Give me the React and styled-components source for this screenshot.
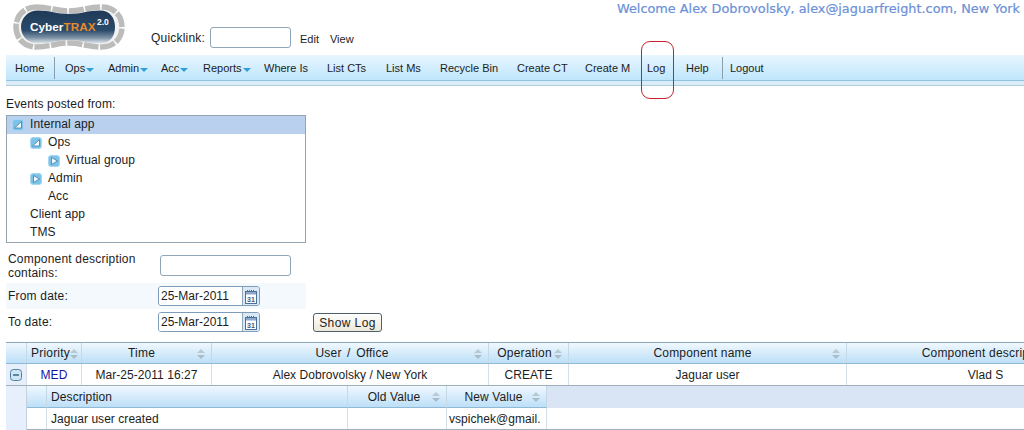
import React from 'react';
import styled, { createGlobalStyle } from 'styled-components';

const Global = createGlobalStyle`
  html, body { margin: 0; padding: 0; background: #fff; height: 430px; overflow: hidden; }
  body { font-family: "Liberation Sans", Arial, sans-serif; font-size: 12px; color: #1c1c1c; letter-spacing: .2px; }
`;
const Page = styled.div`position: relative; width: 1024px; height: 430px; overflow: hidden;`;
const Header = styled.header`display: flex; justify-content: space-between; height: 55px;`;
const Brand = styled.div`display: flex; align-items: flex-start;`;
const LogoSvg = styled.svg`margin: 2px 0 0 12px; flex: none;`;
const Quick = styled.div`display: flex; align-items: center; margin: 27px 0 0 23px; height: 21px;`;
const QuickLabel = styled.span`width: 59px;`;
const TextInput = styled.input`
  box-sizing: border-box; width: ${p => p.$w}px; height: 21px; padding: 0 3px; background: #fff;
  border: 1px solid #8fa6b8; border-radius: 3px; outline: none; font: inherit;
`;
const QuickLink = styled.span`font-size: 11px; margin-left: ${p => p.$ml}px; padding-top: 3px; letter-spacing: 0;`;
const Welcome = styled.div`
  font-family: "DejaVu Sans", sans-serif; font-size: 12.85px; color: #6b90d8; letter-spacing: 0;
  -webkit-text-stroke: .2px #6b90d8; margin: 1px 4px 0 0; white-space: nowrap;
`;
const MenuBar = styled.nav`
  display: flex; align-items: center; box-sizing: border-box; height: 31px; margin-left: 6px; padding: 0 0 4px 9px;
  border-bottom: 1px solid #b4cbd8;
  background: linear-gradient(#e8f6ff 0, #bfe6fc 25px, #8fc4df 25px, #8fc4df 26px, #d9ecf8 26px, #d9ecf8 100%);
`;
const MenuItem = styled.a`
  display: flex; align-items: center; width: ${p => p.$w}px; flex: none; font-size: 11px; white-space: nowrap; letter-spacing: 0;
`;
const Caret = styled.i`
  display: block; width: 0; height: 0; margin: 3px 0 0 1px;
  border-left: 4px solid transparent; border-right: 4px solid transparent; border-top: 4px solid #2f9fd6;
`;
const MenuSep = styled.span`display: block; width: 1px; height: 22px; background: #88a0ad; margin-right: ${p => p.$mr}px; flex: none;`;
const Highlight = styled.div`
  position: absolute; left: 641px; top: 41px; width: 31px; height: 56px; border: 1px solid #c8202c; border-radius: 9px;
`;
const Main = styled.main`padding: 11px 0 0 6px;`;
const Caption = styled.div`height: 18px; line-height: 14px; letter-spacing: .15px;`;
const Tree = styled.div`box-sizing: border-box; width: 300px; height: 128px; border: 1px solid #93a5b0; letter-spacing: .1px;`;
const TreeRow = styled.div`
  display: flex; align-items: center; height: 18px; padding-left: ${p => p.$indent}px; line-height: 16px; padding-bottom: 2px; box-sizing: border-box;
  background: ${p => p.$sel ? '#b9d0ee' : 'transparent'};
`;
const TreeIconBox = styled.svg`flex: none; margin: 2px 6px 0 0;`;
const FormRows = styled.div`margin-top: 5px;`;
const FormRow = styled.div`
  display: flex; align-items: center; height: ${p => p.$h}px; width: 300px;
  background: ${p => p.$alt ? '#f3f9fd' : 'transparent'}; margin-top: ${p => p.$mt || 0}px; position: relative;
`;
const FormLabel = styled.label`width: ${p => p.$w}px; padding: ${p => p.$pt || 0}px 0 0 2px; line-height: 14px; flex: none;`;
const DateField = styled.div`display: flex; box-sizing: border-box; width: 102px; height: 20px; border: 1px solid #7f9db8; border-radius: 3px; overflow: hidden;`;
const DateText = styled.span`flex: 1; line-height: 18px; padding-left: 2px; background: #fff; font-size: 12px; letter-spacing: 0;`;
const CalBtn = styled.span`display: flex; align-items: center; justify-content: center; width: 16px; background: #dbe8f6; border-left: 1px solid #8fa6bd;`;
const ShowLog = styled.button`
  position: absolute; left: 307px; top: 4px; width: 69px; height: 19px; padding: 0;
  border: 1px solid #50606a; border-radius: 3px; font: inherit; letter-spacing: .4px; color: #222;
  background: linear-gradient(#fff, #ece9d8);
`;
const Grid = styled.section`width: 1018px; margin-top: 7px;`;
const HeadRow = styled.div`
  display: flex; height: 22px; box-sizing: border-box; border-top: 1px solid #8ea6b5; border-bottom: 1px solid #8fbad6;
  background: linear-gradient(#f0f8ff, #bcdff7); white-space: nowrap;
`;
const HeadCell = styled.div`
  position: relative; box-sizing: border-box; width: ${p => p.$w}px; flex: none; line-height: 20px; text-align: center;
  border-right: 1px solid #c4d8e6; padding: 0 ${p => p.$pr || 0}px 0 ${p => p.$pl || 0}px;
  word-spacing: ${p => p.$ws || 0}px; overflow: hidden;
`;
const BodyRow = styled.div`display: flex; height: 22px; box-sizing: border-box; border-bottom: 1px solid #9fb0bb; white-space: nowrap; letter-spacing: .05px;`;
const BodyCell = styled.div`
  box-sizing: border-box; width: ${p => p.$w}px; flex: none; line-height: 22px; text-align: ${p => p.$left ? 'left' : 'center'};
  border-right: 1px solid #d6dfe6; color: ${p => p.$c || 'inherit'}; padding-left: ${p => p.$pl || 0}px; overflow: hidden;
  background: ${p => p.$rail ? '#e6effb' : 'transparent'};
  display: ${p => p.$rail ? 'flex' : 'block'}; justify-content: center; align-items: center;
`;
const Detail = styled.div`display: flex; height: 44px;`;
const Rail = styled.div`width: 21px; flex: none; background: #e6effb; border-right: 1px solid #c4d0da; box-sizing: border-box;`;
const Nested = styled.div`flex: 1; min-width: 0;`;
const NestedHead = styled(HeadRow)`border-top: 0; height: 22px; background: #d9e5f5; border-bottom: 0;`;
const NestedCellHead = styled(HeadCell)`
  background: linear-gradient(#f0f8ff, #bcdff7); height: 22px; line-height: 22px; border-bottom: 1px solid #8fbad6;
  text-align: ${p => p.$left ? 'left' : 'center'}; letter-spacing: .1px;
`;
const SortSvg = styled.svg`position: absolute; right: ${p => p.$r}px; top: 6px;`;

const Sort = ({ r = 6 }) => (
  <SortSvg $r={r} width="8" height="10" viewBox="0 0 8 10">
    <path d="M4 0 8 4H0Z" fill="#b9c9d2" /><path d="M0 6h8L4 10Z" fill="#a9bcc7" />
  </SortSvg>
);
const TreeIcon = ({ kind }) => (
  <TreeIconBox width="12" height="12" viewBox="0 0 12 12">
    <rect x=".5" y=".5" width="11" height="11" rx="2.5" fill="#7cc3ea" stroke="#a7d6f0" />
    {kind === 'open'
      ? <path d="M2.500 9 9.500 2.500V9Z" fill="#f2fafe" stroke="#3f7ba6" strokeWidth=".8" />
      : <path d="M3.500 2.500 9.500 6 3.500 9.500Z" fill="#f2fafe" stroke="#3f7ba6" strokeWidth=".8" />}
  </TreeIconBox>
);
const Calendar = () => (
  <svg width="12" height="15" viewBox="0 0 12 15">
    <rect x=".5" y="2.500" width="11" height="12" fill="#fff" stroke="#4a6f9c" />
    <rect x="1" y="3" width="10" height="2.500" fill="#8fa8cc" />
    <path d="M2.500 1v2M4.500 1v2M6.500 1v2M8.500 1v2" stroke="#54718f" />
    <text x="6" y="13" textAnchor="middle" fontFamily="'Liberation Sans',sans-serif" fontSize="7" fontWeight="700" letterSpacing="0" fill="#3c5a80">31</text>
  </svg>
);
const Expander = () => (
  <svg width="12" height="12" viewBox="0 0 12 12">
    <rect x=".5" y=".5" width="11" height="11" rx="3" fill="#cfe6f6" stroke="#4f7f9f" />
    <path d="M3 6h6" stroke="#34607f" strokeWidth="1.400" />
  </svg>
);
const BONE = 'M36 7C50 7 56 11 69 11C82 11 88 7 102 7C114 7 122 16 122 27C122 38 114 47 102 47C88 47 82 43 69 43C56 43 50 47 36 47C24 47 16 38 16 27C16 16 24 7 36 7Z';
const INNER = 'M38 10.500C50 10.500 57 14 69 14C81 14 88 10.500 100 10.500C110 10.500 115 18 115 27C115 36 110 43.500 100 43.500C88 43.500 81 40 69 40C57 40 50 43.500 38 43.500C28 43.500 21 36 21 27C21 18 28 10.500 38 10.500Z';
const Logo = () => (
  <LogoSvg width="116" height="52" viewBox="12 2 116 52">
    <defs>
      <linearGradient id="lg" x1="0" y1="0" x2="0" y2="1">
        <stop offset="0" stopColor="#1f3a58" /><stop offset=".6" stopColor="#2b4a6a" />
        <stop offset=".82" stopColor="#7b90a5" /><stop offset="1" stopColor="#e3e8ec" />
      </linearGradient>
    </defs>
    <path d={BONE} fill="#f1f2f1" stroke="#bcbdbb" strokeWidth="5.500" strokeDasharray="15 1.600" />
    <path d={INNER} fill="url(#lg)" />
    <text x="30" y="31" fontFamily="'Liberation Sans',sans-serif" fontWeight="700" fontSize="11.800" letterSpacing="0" fill="#fff">
      Cyber<tspan fill="#e58a2c">TRAX</tspan>
    </text>
    <text x="97" y="25" fontFamily="'Liberation Sans',sans-serif" fontWeight="700" fontSize="8.500" letterSpacing="0" fill="#fff">2.0</text>
  </LogoSvg>
);

const menu = [
  ['Home', 39, 0, 10], ['Ops', 43, 1], ['Admin', 53, 1], ['Acc', 42, 1], ['Reports', 61, 1], ['Where Is', 63],
  ['List CTs', 59], ['List Ms', 54], ['Recycle Bin', 77], ['Create CT', 68], ['Create M', 62], ['Log', 39], ['Help', 36, 0, 7], ['Logout', 50],
];
const tree = [
  ['Internal app', 5, 'open', true], ['Ops', 23, 'open'], ['Virtual group', 41, 'play'], ['Admin', 23, 'play'],
  ['Acc', 41], ['Client app', 23], ['TMS', 23],
];
const cols = [
  { t: '', w: 21 }, { t: 'Priority', w: 55, pr: 7 }, { t: 'Time', w: 130, pr: 10 }, { t: 'User / Office', w: 277, pl: 4, ws: 2 },
  { t: 'Operation', w: 80, pr: 8 }, { t: 'Component name', w: 278, pr: 10 }, { t: 'Component description', w: 278 },
];

export default function App() {
  return (
    <Page>
      <Global />
      <Header>
        <Brand>
          <Logo />
          <Quick>
            <QuickLabel>Quicklink:</QuickLabel>
            <TextInput $w={81} />
            <QuickLink $ml={9}>Edit</QuickLink>
            <QuickLink $ml={11}>View</QuickLink>
          </Quick>
        </Brand>
        <Welcome>Welcome Alex Dobrovolsky, alex@jaguarfreight.com, New York</Welcome>
      </Header>
      <MenuBar>
        {menu.map(([t, w, caret, sep]) => (
          <React.Fragment key={t}>
            <MenuItem $w={w}>{t}{caret ? <Caret /> : null}</MenuItem>
            {sep ? <MenuSep $mr={sep} /> : null}
          </React.Fragment>
        ))}
      </MenuBar>
      <Highlight />
      <Main>
        <Caption>Events posted from:</Caption>
        <Tree>
          {tree.map(([t, ind, kind, sel]) => (
            <TreeRow key={t} $indent={ind} $sel={sel}>
              {kind ? <TreeIcon kind={kind} /> : null}
              {t}
            </TreeRow>
          ))}
        </Tree>
        <FormRows>
          <FormRow $h={34}>
            <FormLabel $w={152} $pt={1}>Component description contains:</FormLabel>
            <TextInput $w={131} />
          </FormRow>
          <FormRow $h={26} $alt $mt={1}>
            <FormLabel $w={150}>From date:</FormLabel>
            <DateField><DateText>25-Mar-2011</DateText><CalBtn><Calendar /></CalBtn></DateField>
          </FormRow>
          <FormRow $h={26}>
            <FormLabel $w={150}>To date:</FormLabel>
            <DateField><DateText>25-Mar-2011</DateText><CalBtn><Calendar /></CalBtn></DateField>
            <ShowLog>Show Log</ShowLog>
          </FormRow>
        </FormRows>
        <Grid>
          <HeadRow>
            {cols.map((c, i) => (
              <HeadCell key={i} $w={c.w} $pr={c.pr} $pl={c.pl} $ws={c.ws}>{c.t}{c.t && i < 6 ? <Sort r={i === 1 ? 3 : 6} /> : null}</HeadCell>
            ))}
          </HeadRow>
          <BodyRow>
            <BodyCell $w={21} $rail><Expander /></BodyCell>
            <BodyCell $w={55} $c="#1414a8">MED</BodyCell>
            <BodyCell $w={130}>Mar-25-2011 16:27</BodyCell>
            <BodyCell $w={277}>Alex Dobrovolsky / New York</BodyCell>
            <BodyCell $w={80}>CREATE</BodyCell>
            <BodyCell $w={278}>Jaguar user</BodyCell>
            <BodyCell $w={278}>Vlad S</BodyCell>
          </BodyRow>
          <Detail>
            <Rail />
            <Nested>
              <NestedHead>
                <NestedCellHead $w={20} />
                <NestedCellHead $w={301} $left $pl={4}>Description</NestedCellHead>
                <NestedCellHead $w={99} $pr={6}>Old Value<Sort r={6} /></NestedCellHead>
                <NestedCellHead $w={100} $pr={6}>New Value<Sort r={6} /></NestedCellHead>
              </NestedHead>
              <BodyRow>
                <BodyCell $w={20} />
                <BodyCell $w={301} $left $pl={4}>Jaguar user created</BodyCell>
                <BodyCell $w={99} />
                <BodyCell $w={100} $left $pl={2}>vspichek@gmail.</BodyCell>
              </BodyRow>
            </Nested>
          </Detail>
        </Grid>
      </Main>
    </Page>
  );
}
